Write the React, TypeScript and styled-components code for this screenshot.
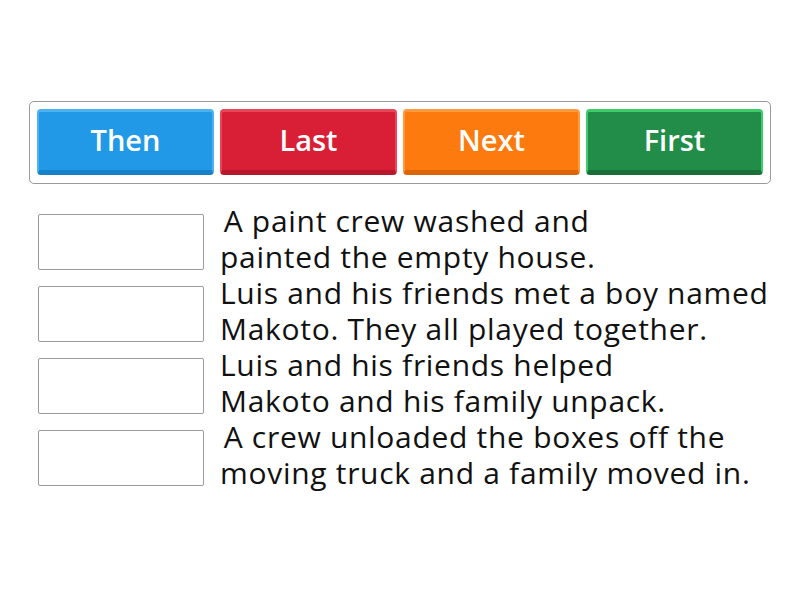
import styled, { createGlobalStyle } from 'styled-components';

const GlobalStyle = createGlobalStyle`
  body {
    margin: 0;
    background: #ffffff;
    font-family: 'Open Sans', 'Lato', sans-serif;
  }
`;

const Page = styled.div`
  width: 800px;
  height: 600px;
  padding: 101px 0 0 29px;
  box-sizing: border-box;
`;

const Tray = styled.div`
  width: 742px;
  height: 83px;
  box-sizing: border-box;
  border: 1px solid #9a9a9a;
  border-radius: 5px;
  padding: 7px 7px 0 7px;
  display: flex;
  gap: 6px;
`;

const palette: Record<string, [string, string, string]> = {
  blue: ['#4cb2f2', '#2199e6', '#1680c8'],
  red: ['#e8475a', '#d81f36', '#b8182c'],
  orange: ['#ff9a40', '#fd7a0e', '#dc650a'],
  green: ['#3ccc6a', '#228c49', '#1a6f39'],
};

const Tile = styled.div<{ $tone: string }>`
  flex: 1;
  height: 66px;
  box-sizing: border-box;
  border-radius: 4px;
  background: ${p => palette[p.$tone][1]};
  border-top: 3px solid ${p => palette[p.$tone][0]};
  border-left: 2px solid ${p => palette[p.$tone][0]};
  border-right: 2px solid ${p => palette[p.$tone][0]};
  border-bottom: 5px solid ${p => palette[p.$tone][2]};
  padding-bottom: 3px;
  display: flex;
  align-items: center;
  justify-content: center;
  color: #ffffff;
  font-size: 29px;
  font-weight: 600;
`;

const List = styled.div`
  margin-top: 22px;
  display: flex;
  flex-direction: column;
`;

const Row = styled.div`
  display: flex;
  align-items: center;
  height: 72px;
`;

const Slot = styled.div`
  width: 166px;
  height: 56px;
  margin-left: 9px;
  box-sizing: border-box;
  border: 1px solid #9a9a9a;
  border-radius: 2px;
  background: #ffffff;
  flex-shrink: 0;
`;

const Sentence = styled.div`
  margin-left: 16px;
  margin-top: -6px;
  font-size: 30px;
  letter-spacing: 0.7px;
  line-height: 36px;
  color: #111111;
  white-space: nowrap;
`;

const tiles = [
  { label: 'Then', tone: 'blue' },
  { label: 'Last', tone: 'red' },
  { label: 'Next', tone: 'orange' },
  { label: 'First', tone: 'green' },
];

const sentences = [
  ['\u200aA paint crew washed and', 'painted the empty house.'],
  ['Luis and his friends met a boy named', 'Makoto. They all played together.'],
  ['Luis and his friends helped', 'Makoto and his family unpack.'],
  ['\u200aA crew unloaded the boxes off the', 'moving truck and a family moved in.'],
];

export default function App() {
  return (
    <>
      <GlobalStyle />
      <Page>
        <Tray>
          {tiles.map(t => (
            <Tile key={t.label} $tone={t.tone}>{t.label}</Tile>
          ))}
        </Tray>
        <List>
          {sentences.map((s, i) => (
            <Row key={i}>
              <Slot />
              <Sentence>
                {s[0]}
                <br />
                {s[1]}
              </Sentence>
            </Row>
          ))}
        </List>
      </Page>
    </>
  );
}
